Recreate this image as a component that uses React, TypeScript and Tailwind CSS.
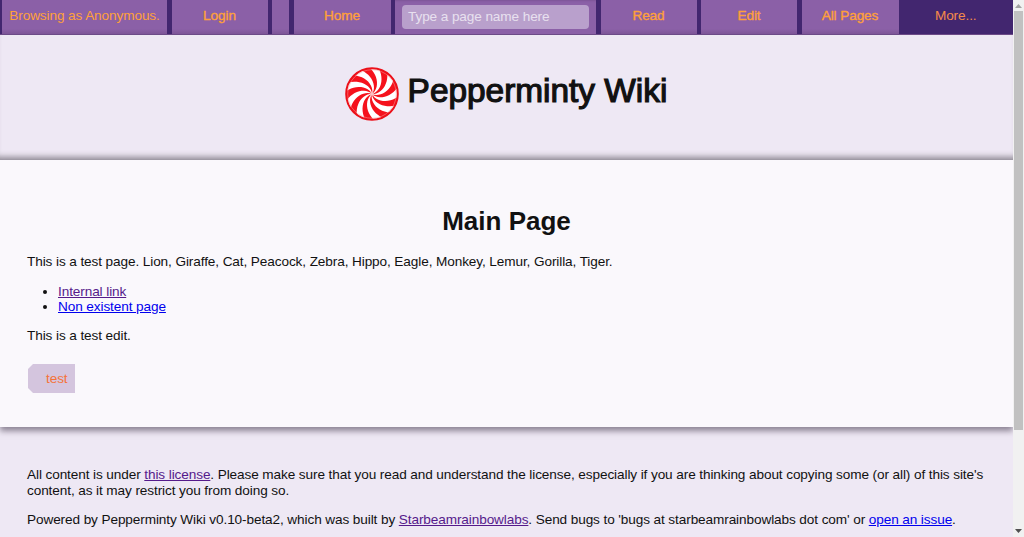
import React from "react";

function wedge(a: number, n: number) {
  const R = 26;
  const half = 180 / n;
  const twist = 62;
  const pts: string[] = [];
  const at = (r: number, deg: number) => {
    const t = (deg * Math.PI) / 180;
    return `${(r * Math.sin(t)).toFixed(2)} ${(-r * Math.cos(t)).toFixed(2)}`;
  };
  const theta = (r: number) => a - twist * Math.pow(r / R, 0.8);
  for (let i = 0; i <= 12; i++) {
    const r = (R * i) / 12;
    pts.push(at(r, theta(r) - half * 0.5));
  }
  for (let i = 12; i >= 0; i--) {
    const r = (R * i) / 12;
    pts.push(at(r, theta(r) + half * 0.5));
  }
  return "M" + pts.join(" L") + " Z";
}

function Candy() {
  const n = 9;
  const angles = Array.from({ length: n }, (_, i) => (i * 360) / n + 8);
  return (
    <svg width="56" height="56" viewBox="-28 -28 56 56" className="shrink-0 -mt-[1px]">
      <circle cx="0" cy="0" r="26" fill="#ffffff" />
      {angles.map((a) => (
        <path key={a} d={wedge(a, n)} fill="#f5121c" />
      ))}
      <circle cx="0" cy="0" r="25.8" fill="none" stroke="#ec1019" strokeWidth="2" />
      <circle cx="0" cy="0" r="24.3" fill="none" stroke="#f7a0a0" strokeOpacity="0.5" strokeWidth="1" />
      <circle cx="0" cy="0" r="1.8" fill="#f9c4c4" />
    </svg>
  );
}

function NavCell({ w, children, bold = true }: { w: string; children?: React.ReactNode; bold?: boolean }) {
  return (
    <div
      className={`${w} h-full flex items-center justify-center pb-[1px] bg-gradient-to-b from-[#8b60a7] from-[85%] to-[#7d5597] text-[#ffa03a] text-[13.6px] tracking-[-0.1px] ${bold ? "[-webkit-text-stroke:0.35px_#ffa03a]" : ""}`}
    >
      {children}
    </div>
  );
}

export default function App() {
  return (
    <div className="flex h-[537px] w-[1024px] overflow-hidden bg-[#f0f0f0] font-['Liberation_Sans',Arial,sans-serif] text-[#111111]">
      <div className="w-[1013px] h-[537px] overflow-hidden bg-[#eee8f4] shrink-0">
        <nav className="h-[35px] border-b border-[#6c4a87] bg-[#42266f] pl-[2px] flex gap-[4.5px]">
          <NavCell w="w-[165px]" bold={false}>Browsing as Anonymous.</NavCell>
          <NavCell w="w-[96px]">Login</NavCell>
          <NavCell w="w-[17px]" />
          <NavCell w="w-[97px]">Home</NavCell>
          <div className="w-[201px] h-full flex items-center justify-center bg-[#8b60a7] shadow-[inset_0_4px_2px_-3px_#7d5597]">
            <div className="w-[187px] h-[24px] rounded-[4px] bg-[#b9a0cc] flex items-center pl-[6px] text-[13.6px] tracking-[-0.1px] text-[#e8e0ef]">
              Type a page name here
            </div>
          </div>
          <NavCell w="w-[96px]">Read</NavCell>
          <NavCell w="w-[96px]">Edit</NavCell>
          <NavCell w="w-[97px]">All Pages</NavCell>
          <div className="flex-1 -ml-[4.5px] h-full flex items-center justify-center pb-[1px] bg-[#42266f] text-[#f58a4a] text-[13.6px] tracking-[-0.1px]">
            More...
          </div>
        </nav>

        <header className="h-[125px] flex items-center justify-center gap-[8px] pb-[7px] pr-[2px] shadow-[inset_0_-8px_6px_-5px_#8f8a94]">
          <Candy />
          <h1 className="text-[33.4px] font-normal leading-none -mt-[7px] [-webkit-text-stroke:1.2px_#111111]">Pepperminty Wiki</h1>
        </header>

        <main className="h-[267px] bg-[#faf8fc] px-[27px] pt-[46px] text-[13.6px] tracking-[-0.1px] leading-[15px] shadow-[0_4px_6px_rgba(60,50,70,0.55)] relative">
          <h2 className="text-center font-bold text-[26px] tracking-normal leading-[31px] mb-[17px]">Main Page</h2>
          <p className="mb-[14px] leading-[16px]">
            This is a test page. Lion, Giraffe, Cat, Peacock, Zebra, Hippo, Eagle, Monkey, Lemur, Gorilla, Tiger.
          </p>
          <ul className="list-disc pl-[31px] mb-[14px]">
            <li><a className="underline text-[#551a8b]">Internal link</a></li>
            <li><a className="underline text-[#0000ee]">Non existent page</a></li>
          </ul>
          <p className="mb-[20px] leading-[16px]">This is a test edit.</p>
          <div className="ml-[1px] w-[47px] h-[29px] bg-[#d4c5de] text-[#f5733a] flex items-center pl-[18px] [clip-path:polygon(5px_0,100%_0,100%_100%,5px_100%,0_calc(100%-5px),0_5px)]">
            test
          </div>
        </main>

        <footer className="px-[27px] pt-[40px] text-[13.6px] tracking-[-0.1px] leading-[16px]">
          <p className="mb-[13px]">
            All content is under <a className="underline text-[#551a8b]">this license</a>. Please make sure that you read and understand the license, especially if you are thinking about copying some (or all) of this site's content, as it may restrict you from doing so.
          </p>
          <p>
            Powered by Pepperminty Wiki v0.10-beta2, which was built by <a className="underline text-[#551a8b]">Starbeamrainbowlabs</a>. Send bugs to 'bugs at starbeamrainbowlabs dot com' or <a className="underline text-[#0000ee]">open an issue</a>.
          </p>
        </footer>
      </div>

      <div className="w-[11px] h-full flex flex-col items-center bg-[#f1f1f1] relative">
        <svg width="9" height="10" viewBox="0 0 9 10" className="mt-[1px]"><path d="M4.5 3 L8 7 H1 Z" fill="#a3a3a3" /></svg>
        <div className="w-[9px] h-[419px] bg-[#c1c1c1]" />
        <svg width="9" height="10" viewBox="0 0 9 10" className="mt-auto mb-[1px]"><path d="M4.5 7 L8 3 H1 Z" fill="#505050" /></svg>
      </div>
    </div>
  );
}
